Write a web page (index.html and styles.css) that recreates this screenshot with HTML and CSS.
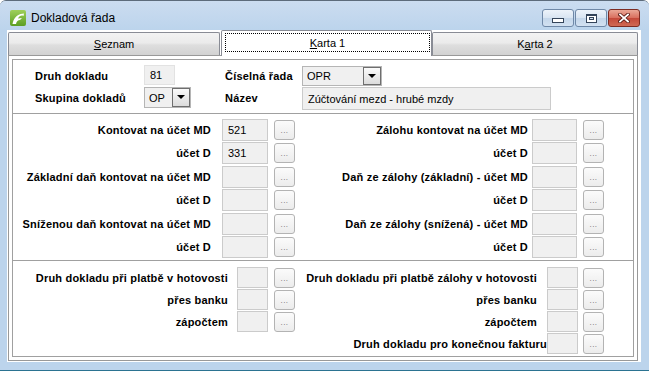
FILE: index.html
```html
<!DOCTYPE html>
<html>
<head lang="cs">
    <meta charset="UTF-8">
    <title>Dokladová řada</title>
    <link rel="stylesheet" href="styles.css">
</head>
<body>
<div class="window">
    <div class="titlebar">
        <svg class="app-icon" width="16" height="16" viewBox="0 0 16 16">
            <defs>
                <linearGradient id="g" x1="0" y1="0" x2="0" y2="1">
                    <stop offset="0" stop-color="#9fd05a"/>
                    <stop offset="1" stop-color="#5c9e22"/>
                </linearGradient>
            </defs>
            <rect x="0" y="0" width="16" height="16" rx="2" fill="url(#g)"/>
            <path d="M2.5 14 C3.5 9 6 5.5 10.5 4 L14 3.5 L13.5 6 C11.5 5 9 6 8 8.5 L12 8 L10 10 C8 10 6.5 11.5 6 14 Z" fill="#fff"/>
        </svg>
        <span class="title">Dokladová řada</span>
        <div class="caption-buttons">
            <div class="cap-btn"><span class="glyph-min"></span></div>
            <div class="cap-btn"><span class="glyph-max"><span></span></span></div>
            <div class="cap-btn close">
                <svg width="12" height="10" viewBox="0 0 12 10">
                    <path d="M2 1.5 L10 8.5 M10 1.5 L2 8.5" stroke="#5a1c16" stroke-width="3.6" stroke-linecap="square"/>
                    <path d="M2 1.5 L10 8.5 M10 1.5 L2 8.5" stroke="#fff" stroke-width="1.8" stroke-linecap="square"/>
                </svg>
            </div>
        </div>
    </div>

    <div class="client">
        <div class="tabs">
            <div class="tab tab-list"><u>S</u>eznam</div>
            <div class="tab tab-card1 active"><span class="focus"><u>K</u>arta 1</span></div>
            <div class="tab tab-card2">K<u>a</u>rta 2</div>
        </div>

        <div class="tab-page">
            <div class="groups">
                <!-- hlavicka -->
                <div class="group head">
                    <div class="label">Druh dokladu</div>
                    <div class="field field-81">81</div>
                    <div></div>
                    <div class="label">Číselná řada</div>
                    <div class="combo combo-opr"><span class="combo-text">OPR</span><span class="combo-btn"></span></div>

                    <div class="label">Skupina dokladů</div>
                    <div class="combo combo-op"><span class="combo-text">OP</span><span class="combo-btn"></span></div>
                    <div></div>
                    <div class="label">Název</div>
                    <div class="field field-name">Zúčtování mezd - hrubé mzdy</div>
                </div>

                <!-- kontace -->
                <div class="group accounts">
                    <div class="pair">
                        <div class="label">Kontovat na účet MD</div>
                        <div class="field">521</div>
                        <div class="pick">...</div>
                        <div class="label">Zálohu kontovat na účet MD</div>
                        <div class="field"></div>
                        <div class="pick">...</div>

                        <div class="label">účet D</div>
                        <div class="field">331</div>
                        <div class="pick">...</div>
                        <div class="label">účet D</div>
                        <div class="field"></div>
                        <div class="pick">...</div>
                    </div>
                    <div class="pair">
                        <div class="label">Základní daň kontovat na účet MD</div>
                        <div class="field"></div>
                        <div class="pick">...</div>
                        <div class="label">Daň ze zálohy (základní) - účet MD</div>
                        <div class="field"></div>
                        <div class="pick">...</div>

                        <div class="label">účet D</div>
                        <div class="field"></div>
                        <div class="pick">...</div>
                        <div class="label">účet D</div>
                        <div class="field"></div>
                        <div class="pick">...</div>
                    </div>
                    <div class="pair">
                        <div class="label">Sníženou daň kontovat na účet MD</div>
                        <div class="field"></div>
                        <div class="pick">...</div>
                        <div class="label">Daň ze zálohy (snížená) - účet MD</div>
                        <div class="field"></div>
                        <div class="pick">...</div>

                        <div class="label">účet D</div>
                        <div class="field"></div>
                        <div class="pick">...</div>
                        <div class="label">účet D</div>
                        <div class="field"></div>
                        <div class="pick">...</div>
                    </div>
                </div>

                <!-- druhy dokladu -->
                <div class="group docs">
                    <div class="label">Druh dokladu při platbě v hotovosti</div>
                    <div class="field"></div>
                    <div class="pick">...</div>
                    <div class="label">Druh dokladu při platbě zálohy v hotovosti</div>
                    <div class="field"></div>
                    <div class="pick">...</div>

                    <div class="label">přes banku</div>
                    <div class="field"></div>
                    <div class="pick">...</div>
                    <div class="label">přes banku</div>
                    <div class="field"></div>
                    <div class="pick">...</div>

                    <div class="label">zápočtem</div>
                    <div class="field"></div>
                    <div class="pick">...</div>
                    <div class="label">zápočtem</div>
                    <div class="field"></div>
                    <div class="pick">...</div>

                    <div class="blank"></div>
                    <div class="label">Druh dokladu pro konečnou fakturu</div>
                    <div class="field"></div>
                    <div class="pick">...</div>
                </div>
            </div>
        </div>
    </div>
</div>
</body>
</html>
```

FILE: styles.css
```css
* {
    box-sizing: border-box;
}

body {
    margin: 0;
    font-family: "Liberation Sans", Arial, sans-serif;
    font-size: 11px;
    color: #000;
    background: #fff;
}

/* okno */
.window {
    width: 649px;
    height: 371px;
    display: flex;
    flex-direction: column;
    background: #bcd4ec;
    border-top: 1px solid #5d6b7b;
    border-bottom: 1px solid #2b7391;
    border-radius: 6px 6px 0 0;
    overflow: hidden;
}

.titlebar {
    height: 29px;
    flex: none;
    display: flex;
    align-items: center;
    padding: 5px 9px 0 10px;
    background: linear-gradient(#cbdcf0, #bcd4ec);
}

.app-icon {
    flex: none;
}

.title {
    margin-left: 5px;
    font-size: 12px;
    color: #000;
}

.caption-buttons {
    margin-left: auto;
    display: flex;
    gap: 1px;
}

.cap-btn {
    width: 32px;
    height: 18px;
    border: 1px solid #6f88a7;
    border-radius: 3px;
    display: flex;
    align-items: center;
    justify-content: center;
    background: linear-gradient(#edf3fa 0%, #d9e5f2 48%, #c4d6ea 52%, #d2e1f1 100%);
}

.cap-btn.close {
    border-color: #7d2c23;
    background: linear-gradient(#eaa796 0%, #d9705f 48%, #c4493a 52%, #d06a55 100%);
}

.glyph-min {
    width: 12px;
    height: 5px;
    margin-top: 5px;
    border: 1px solid #34445a;
    background: #fff;
}

.glyph-max {
    width: 11px;
    height: 9px;
    border: 1px solid #34445a;
    border-top-width: 2px;
    background: #fff;
    display: flex;
    align-items: center;
    justify-content: center;
}

.glyph-max span {
    width: 5px;
    height: 3px;
    border: 1px solid #34445a;
    background: #d6e3f1;
}

/* klientska oblast */
.client {
    margin-left: 7px;
    width: 634px;
    height: 332px;
    flex: none;
    background: #fff;
    padding: 0 3px 1px 1px;
    display: flex;
    flex-direction: column;
}

.tabs {
    height: 25px;
    flex: none;
    display: flex;
    align-items: flex-end;
}

.tab {
    height: 23px;
    border: 1px solid #898c95;
    border-bottom: 0;
    border-radius: 2px 2px 0 0;
    display: flex;
    align-items: center;
    justify-content: center;
    background: linear-gradient(#f3f3f3 0%, #ebebeb 45%, #dedede 55%, #d2d2d2 100%);
}

.tab-list {
    width: 212px;
    margin-right: 1px;
}

.tab-card1 {
    width: 211px;
}

.tab-card2 {
    width: 206px;
}

.tab.active {
    position: relative;
    z-index: 1;
    height: 26px;
    margin-bottom: -1px;
    background: #fff;
    padding: 2px 1px 4px 3px;
    align-items: stretch;
}

.focus {
    flex: 1;
    border: 1px dotted #000;
    display: flex;
    align-items: center;
    justify-content: center;
}

.tab u {
    text-decoration-thickness: 1px;
}

.tab-page {
    flex: 1;
    display: flex;
    padding: 3px;
    border: 1px solid #999;
}

.groups {
    flex: 1;
    display: flex;
    flex-direction: column;
    border: 1px solid #a0a0a0;
}

.group + .group {
    border-top: 1px solid #a0a0a0;
}

.label {
    font-weight: bold;
    letter-spacing: 0.2px;
    white-space: nowrap;
    align-self: center;
}

.field {
    background: #f0f0f0;
    border: 1px solid #cbcbcb;
    padding-left: 5px;
    white-space: nowrap;
    display: flex;
    align-items: center;
}

.pick {
    width: 21px;
    height: 20px;
    align-self: center;
    border: 1px solid #b3b3b3;
    border-radius: 3px;
    background: linear-gradient(#fbfbfb, #ececec);
    color: #6a6a6a;
    font-size: 8px;
    line-height: 19px;
    text-align: center;
    letter-spacing: 0.5px;
}

/* hlavicka */
.head {
    height: 53px;
    display: grid;
    grid-template-columns: 109px 47px 34px 77px 1fr;
    grid-template-rows: 21px 22px;
    row-gap: 1px;
    padding: 5px 0 0 22px;
}

.field-81 {
    width: 31px;
    height: 20px;
    align-self: start;
    border-color: #e2e2e2;
}

.field-name {
    width: 249px;
    height: 23px;
    align-self: start;
}

.combo {
    display: flex;
    border: 1px solid #b5b5b5;
    background: #f0f0f0;
    align-self: start;
}

.combo-op {
    width: 47px;
    height: 21px;
}

.combo-opr {
    width: 80px;
    height: 20px;
    margin-top: 1px;
}

.combo-text {
    flex: 1;
    padding-left: 4px;
    display: flex;
    align-items: center;
}

.combo-btn {
    width: 18px;
    border: 1px solid #6e6e6e;
    background: linear-gradient(#fafafa, #dcdcdc);
    position: relative;
}

.combo-btn::after {
    content: "";
    position: absolute;
    left: 4px;
    top: 6px;
    border-left: 4px solid transparent;
    border-right: 4px solid transparent;
    border-top: 4px solid #000;
}

/* kontace */
.accounts {
    height: 147px;
    padding-top: 5px;
    display: flex;
    flex-direction: column;
    gap: 2px;
}

.pair {
    display: grid;
    grid-template-columns: 209px 52px 21px 237px 51px 21px;
    grid-template-rows: 22px 22px;
    row-gap: 1px;
}

.pair .label,
.docs .label {
    text-align: right;
}

.pair .label:nth-child(6n+1) {
    padding-right: 11px;
}

.pair .label:nth-child(6n+4) {
    padding-right: 4px;
}

.pair .field {
    width: 46px;
}

.pair .field:nth-child(6n+5) {
    width: 45px;
}

/* druhy dokladu */
.docs {
    flex: 1;
    padding-top: 6px;
    display: grid;
    grid-template-columns: 224px 37px 21px 252px 36px 21px;
    grid-auto-rows: 21px;
    row-gap: 1px;
    align-content: start;
}

.docs .label:nth-child(6n+1) {
    padding-right: 9px;
}

.docs .label:nth-child(6n+4) {
    padding-right: 10px;
}

.docs .field {
    width: 31px;
}

.docs .blank {
    grid-column: span 3;
}
```
